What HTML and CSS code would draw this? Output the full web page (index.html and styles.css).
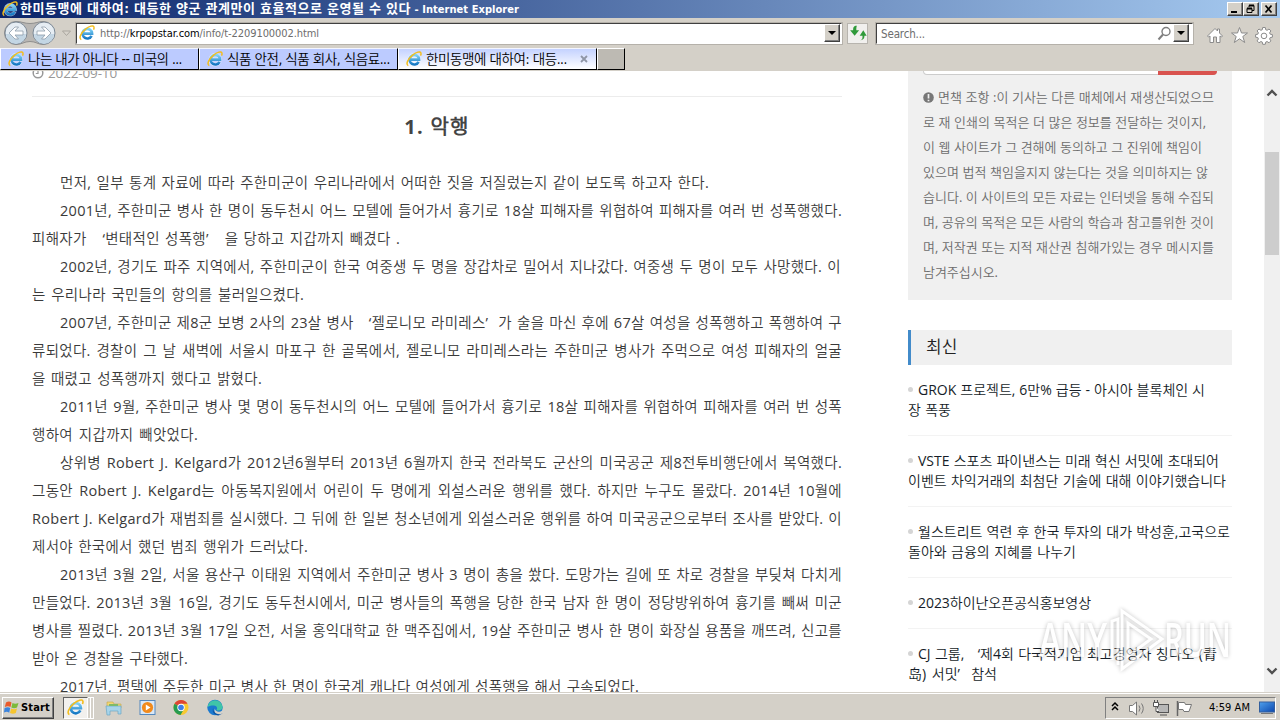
FILE: index.html
```html
<!DOCTYPE html>
<html lang="ko">

<head>
    <meta charset="UTF-8">
    <meta name="viewport" content="width=device-width, initial-scale=1.0">
    <title>한미동맹에 대하여</title>
    <link rel="stylesheet" href="styles.css">
</head>

<body>
    <svg width="0" height="0" class="defs">
        <defs>
            <linearGradient id="ieBlue" x1="0" y1="0" x2="0" y2="1">
                <stop offset="0" stop-color="#7fd3f7" />
                <stop offset="1" stop-color="#1779c4" />
            </linearGradient>
            <linearGradient id="screen" x1="0" y1="0" x2="1" y2="1">
                <stop offset="0" stop-color="#4fa0ec" />
                <stop offset="1" stop-color="#0b47ae" />
            </linearGradient>
            <symbol id="ie" viewBox="0 0 16 16">
                <path d="M12.8 10.6A4.9 4.9 0 1 1 13.2 8.4H4" fill="none" stroke="#fff" stroke-opacity=".6" stroke-width="3.6" />
                <path d="M12.6 10.8A4.8 4.8 0 1 1 13.1 8.6H4.4" fill="none" stroke="url(#ieBlue)" stroke-width="2.6" />
                <path d="M2.3 14.6C-.6 13.4 2 7.800 6.300 4.300 10 1.200 14.500-.3 15 2.200c.2.8-.1 1.700-.5 2.500" fill="none" stroke="#f3bd1d" stroke-width="1.500" />
            </symbol>
        </defs>
    </svg>

    <div id="titlebar">
        <svg class="ie16"><use href="#ie" /></svg>
        <span class="title"><span data-w="391" data-fit="letter">한미동맹에 대하여: 대등한 양군 관계만이 효율적으로 운영될 수 있다</span><span data-w="108" data-fit="letter"> - Internet Explorer</span></span>
        <div class="buttons">
            <i class="raised"><svg width="14" height="12"><path d="M3 9h6" stroke="#000" stroke-width="2" /></svg></i>
            <i class="raised"><svg width="14" height="12"><path d="M5 4V2.500h5v5H8M3 5.500h5v4H3z" fill="none" stroke="#000" /><path d="M5 2.500h5M3 5.500h5" stroke="#000" stroke-width="2" /></svg></i>
            <i class="raised last"><svg width="14" height="12"><path d="M3.500 2.500l6 7M9.500 2.500l-6 7" stroke="#000" stroke-width="1.700" /></svg></i>
        </div>
    </div>

    <div id="navbar">
        <svg class="backforward" width="72" height="26" viewBox="0 0 72 26">
            <path d="M15 1.500c6 0 8 2 14 2s8-2 13-2a11 11 0 0 1 0 23c-5 0-7-3-13-3s-8 3-14 3a11.500 11.500 0 0 1 0-23z" fill="#b9b7b4" stroke="#8e8e8e" />
            <circle cx="15" cy="13" r="11" fill="#e6edf3" stroke="#7c8996" />
            <circle cx="43" cy="13" r="11" fill="#e6edf3" stroke="#7c8996" />
            <path d="M5 14a10 10 0 0 0 20 0zM33 14a10 10 0 0 0 20 0z" fill="#c3d6e4" />
            <path d="M22 11h-8l3.500-4h-3.500l-6 6 6 6H17.500l-3.500-4h8zM36 11h8l-3.500-4h3.500l6 6-6 6h-3.500l3.500-4h-8z" fill="#fff" stroke="#8d9caa" stroke-width=".8" />
            <path d="M61.500 11h8l-4 4.500z" fill="#d8d4cc" stroke="#aaa69f" />
        </svg>
        <div class="field address">
            <svg class="ie16"><use href="#ie" /></svg>
            <span class="url" data-w="219" data-fit="letter">http://<b>krpopstar.com</b>/info/t-2209100002.html</span>
            <i class="raised drop"></i>
        </div>
        <div class="refresh">
            <svg width="18" height="18" viewBox="0 0 16 16"><path d="M7 1.500C4 1.500 3.700 3 3.700 5.500H1l4 5 4-5H6.500c0-2 0-2.500.5-4zM9 14.500c3 0 3-1.500 3-4H9.500l3.200-5 3 5h-2c0 2.500-1 4-4.700 4z" fill="#2f9a3a" /></svg>
        </div>
        <div class="field search">
            <span data-w="44" data-fit="letter">Search...</span>
            <svg width="15" height="15" viewBox="0 0 15 15"><circle cx="9" cy="5.500" r="4" fill="#fff" stroke="#7e7e7e" stroke-width="1.400" /><path d="M6 8.500L1.500 13.500" stroke="#7e7e7e" stroke-width="2" /></svg>
            <i class="raised drop"></i>
        </div>
        <svg class="tools" width="68" height="20" viewBox="0 0 68 20" fill="#fff" stroke="#8b8b8b">
            <path d="M1.500 11L9 3.500l2.500 2.500V4h2v4l3 3-1 1-1.500-1v6.500h-3.500V12H7.500v5.500H4V11l-1.500 1z" />
            <path d="M33.500 2.500l2 5.500h6l-4.700 3.500 1.900 6-5.200-3.700-5.200 3.700 1.900-6L25.500 8h6z" />
            <path d="M56.700 2.500h2.600l.4 2.200 1.400.6 1.900-1.300 1.900 1.900-1.300 1.900.6 1.400 2.200.4v2.600l-2.200.4-.6 1.400 1.300 1.900-1.900 1.900-1.900-1.300-1.400.6-.4 2.200h-2.600l-.4-2.200-1.400-.6-1.900 1.300-1.900-1.900 1.300-1.900-.6-1.400-2.200-.4V9.600l2.200-.4.6-1.400-1.300-1.900L53 4l1.900 1.300 1.400-.6z" />
            <circle cx="58" cy="10.900" r="2.800" />
        </svg>
    </div>

    <div id="tabs">
        <div class="tab"><svg class="ie16"><use href="#ie" /></svg><span data-w="154" data-fit="letter">나는 내가 아니다 -- 미국의 ...</span></div>
        <div class="tab"><svg class="ie16"><use href="#ie" /></svg><span data-w="163" data-fit="letter">식품 안전, 식품 회사, 식음료...</span></div>
        <div class="tab active"><svg class="ie16"><use href="#ie" /></svg><span data-w="141" data-fit="letter">한미동맹에 대하여: 대등...</span>
            <svg class="x" width="8" height="8"><path d="M1 1l6 6M7 1l-6 6" stroke="#8f96a6" stroke-width="1.800" /></svg>
        </div>
        <div class="newtab"></div>
    </div>

    <div id="view">
        <div id="article">
            <div class="date">
                <svg width="12" height="12" viewBox="0 0 12 12"><circle cx="6" cy="6" r="4.800" fill="none" stroke="#999" stroke-width="1.500" /><path d="M6 3v3.500H3.800" fill="none" stroke="#999" stroke-width="1.200" /></svg>
                <span data-w="72" data-fit="letter">2022-09-10</span>
            </div>
            <h2><span data-w="67" data-fit="letter">1. 악행</span></h2>
            <p class="in"><span data-w="649">먼저, 일부 통계 자료에 따라 주한미군이 우리나라에서 어떠한 짓을 저질렀는지 같이 보도록 하고자 한다.</span></p>
            <p class="in"><span data-w="782">2001년, 주한미군 병사 한 명이 동두천시 어느 모텔에 들어가서 흉기로 18살 피해자를 위협하여 피해자를 여러 번 성폭행했다.</span></p>
            <p><span data-w="368">피해자가 &nbsp;&nbsp;‘변태적인 성폭행’ &nbsp;&nbsp;을 당하고 지갑까지 빼겼다 .</span></p>
            <p class="in"><span data-w="781">2002년, 경기도 파주 지역에서, 주한미군이 한국 여중생 두 명을 장갑차로 밀어서 지나갔다. 여중생 두 명이 모두 사망했다. 이</span></p>
            <p><span data-w="272">는 우리나라 국민들의 항의를 불러일으켰다.</span></p>
            <p class="in"><span data-w="782">2007년, 주한미군 제8군 보병 2사의 23살 병사 &nbsp;&nbsp;‘젤로니모 라미레스’ &nbsp;가 술을 마신 후에 67살 여성을 성폭행하고 폭행하여 구</span></p>
            <p><span data-w="810">류되었다. 경찰이 그 날 새벽에 서울시 마포구 한 골목에서, 젤로니모 라미레스라는 주한미군 병사가 주먹으로 여성 피해자의 얼굴</span></p>
            <p><span data-w="230">을 때렸고 성폭행까지 했다고 밝혔다.</span></p>
            <p class="in"><span data-w="782">2011년 9월, 주한미군 병사 몇 명이 동두천시의 어느 모텔에 들어가서 흉기로 18살 피해자를 위협하여 피해자를 여러 번 성폭</span></p>
            <p><span data-w="166">행하여 지갑까지 빼앗었다.</span></p>
            <p class="in"><span data-w="782">상위병 Robert J. Kelgard가 2012년6월부터 2013년 6월까지 한국 전라북도 군산의 미국공군 제8전투비행단에서 복역했다.</span></p>
            <p><span data-w="810">그동안 Robert J. Kelgard는 아동복지원에서 어린이 두 명에게 외설스러운 행위를 했다. 하지만 누구도 몰랐다. 2014년 10월에</span></p>
            <p><span data-w="810">Robert J. Kelgard가 재범죄를 실시했다. 그 뒤에 한 일본 청소년에게 외설스러운 행위를 하여 미국공군으로부터 조사를 받았다. 이</span></p>
            <p><span data-w="276">제서야 한국에서 했던 범죄 행위가 드러났다.</span></p>
            <p class="in"><span data-w="782">2013년 3월 2일, 서울 용산구 이태원 지역에서 주한미군 병사 3 명이 총을 쐈다. 도망가는 길에 또 차로 경찰을 부딪쳐 다치게</span></p>
            <p><span data-w="810">만들었다. 2013년 3월 16일, 경기도 동두천시에서, 미군 병사들의 폭행을 당한 한국 남자 한 명이 정당방위하여 흉기를 빼써 미군</span></p>
            <p><span data-w="810">병사를 찔렸다. 2013년 3월 17일 오전, 서울 홍익대학교 한 맥주집에서, 19살 주한미군 병사 한 명이 화장실 용품을 깨뜨려, 신고를</span></p>
            <p><span data-w="156">받아 온 경찰을 구타했다.</span></p>
            <p class="in"><span data-w="579">2017년, 평택에 주둔한 미군 병사 한 명이 한국계 캐나다 여성에게 성폭행을 해서 구속되었다.</span></p>
        </div>

        <div id="sidebar">
            <div class="notice">
                <div class="searchbox"><i></i></div>
                <p><svg width="11" height="11" viewBox="0 0 11 11"><circle cx="5.500" cy="5.500" r="5.300" fill="#777" /><path d="M5.500 2v4.500M5.500 7.700v1.500" stroke="#efefef" stroke-width="1.700" /></svg><span data-w="276">면책 조항 :이 기사는 다른 매체에서 재생산되었으므</span></p>
                <p><span data-w="283">로 재 인쇄의 목적은 더 많은 정보를 전달하는 것이지,</span></p>
                <p><span data-w="279">이 웹 사이트가 그 견해에 동의하고 그 진위에 책임이</span></p>
                <p><span data-w="285">있으며 법적 책임을지지 않는다는 것을 의미하지는 않</span></p>
                <p><span data-w="291">습니다. 이 사이트의 모든 자료는 인터넷을 통해 수집되</span></p>
                <p><span data-w="291">며, 공유의 목적은 모든 사람의 학습과 참고를위한 것이</span></p>
                <p><span data-w="291">며, 저작권 또는 지적 재산권 침해가있는 경우 메시지를</span></p>
                <p><span data-w="75" data-fit="letter">남겨주십시오.</span></p>
            </div>
            <h3>최신</h3>
            <ul>
                <li><span data-w="287">GROK 프로젝트, 6만% 급등 - 아시아 블록체인 시</span><br><span data-w="43">장 폭풍</span></li>
                <li><span data-w="301">VSTE 스포츠 파이낸스는 미래 혁신 서밋에 초대되어</span><br><span data-w="318">이벤트 차익거래의 최첨단 기술에 대해 이야기했습니다</span></li>
                <li><span data-w="312">월스트리트 역련 후 한국 투자의 대가 박성훈,고국으로</span><br><span data-w="168">돌아와 금융의 지혜를 나누기</span></li>
                <li><span data-w="173" data-fit="letter">2023하이난오픈공식홍보영상</span></li>
                <li><span data-w="299">CJ 그룹, &nbsp;&nbsp;‘제4회 다국적기업 최고경영자 칭다오 (青</span><br><span data-w="89">岛) 서밋’ &nbsp;참석</span></li>
            </ul>
        </div>

        <div id="scrollbar">
            <svg width="12" height="8"><path d="M1.500 6.500L6 2l4.500 4.500" fill="none" stroke="#505050" stroke-width="2.400" /></svg>
            <div class="thumb"></div>
            <svg width="12" height="8"><path d="M1.500 1.500L6 6l4.500-4.500" fill="none" stroke="#505050" stroke-width="2.400" /></svg>
        </div>
    </div>

    <div id="taskbar">
        <div class="start raised">
            <svg width="15" height="15" viewBox="0 0 15 15">
                <path d="M2 2.500Q5 .500 7.500 2.500L6.500 7Q4 5.300.8 7z" fill="#ea5b2b" />
                <path d="M8.500 3Q11 4.500 14.500 3L13 7.500Q10 9 7.300 7.500z" fill="#7cba3b" />
                <path d="M.6 8Q4 6.500 6.200 8L5.200 12.700Q3 11 0 12.500z" fill="#3b84dd" />
                <path d="M7.200 8.500Q10 10 13 8.500L11.800 13Q9 14.500 6 13z" fill="#f6c52e" />
            </svg>
            <b data-w="29" data-fit="letter">Start</b>
        </div>
        <div class="running"><svg width="17" height="17"><use href="#ie" /></svg></div>
        <i class="stack"></i><i class="stack"></i>
        <svg class="quick" width="120" height="18" viewBox="0 0 120 18">
            <path d="M2 3h6l1 2h7v4H2z" fill="#f1d673" stroke="#c5a446" stroke-width=".6" />
            <path d="M1 7h15v8h-3v-3H5v4H2z" fill="#a7d4ea" stroke="#6aa6c4" stroke-width=".7" />
            <path d="M4 5h9v2H4z" fill="#7dba6c" />
            <rect x="35" y="1.500" width="15" height="14" fill="#d9e8f7" stroke="#5488bd" />
            <circle cx="42.500" cy="8.500" r="5.600" fill="#f18a1c" />
            <path d="M40.800 5.500v6l4.700-3z" fill="#fff" />
            <circle cx="76" cy="8.500" r="7.500" fill="#f8c931" />
            <path d="M76 8.500L69.500 4.700A7.500 7.500 0 0 1 82.500 4.700H76z" fill="#dd4436" />
            <path d="M69.500 4.700A7.500 7.500 0 0 0 75.500 16l3.500-6-3-1.500z" fill="#279b50" />
            <circle cx="76" cy="8.500" r="3.700" fill="#fff" />
            <circle cx="76" cy="8.500" r="2.800" fill="#3e7ee8" />
            <circle cx="110" cy="8.500" r="7.700" fill="#1b79cf" />
            <path d="M102.400 8A7.700 7.700 0 0 1 117.700 8c0 3-3 4-6.500 3.200 2-2 .5-4.500-2.200-4.700-3-.2-5 .500-6.600 1.500z" fill="#40c4a8" />
            <path d="M108.500 8.500c-1.500 4 3 6 7.500 4.500l1.500 1.500-4 2c-5-.5-7-4-5-8z" fill="#0d57a6" />
            <path d="M110 9.500c-.5 3 4 4 7 2.500l2 2-3 1c-4 1-8-1.500-6-5.500z" fill="#d6d2ca" />
        </svg>
        <div class="tray">
            <svg width="87" height="20" viewBox="0 0 87 20">
                <path d="M6 8l3-3 3 3M6 12l3-3 3 3" fill="none" stroke="#000" stroke-width="1.500" />
                <path d="M23.500 7.500h3L30.500 4v13l-4-3.500h-3z" fill="#fff" stroke="#777" />
                <path d="M33 7.500q2 3 0 6M35.500 5.500q3.500 5 0 10" fill="none" stroke="#777" />
                <rect x="51.500" y="6.500" width="11" height="8" fill="#b7b7b7" stroke="#555" />
                <path d="M54 17h7" stroke="#555" />
                <path d="M47.500 4.500h5v4h-5zM50 8v5.500h3M48.500 2v2M51.500 2v2" fill="#fff" stroke="#555" />
                <path d="M71.500 3v15" stroke="#666" stroke-width="1.500" />
                <path d="M72.500 4.500h6l1 2h6l-2.500 7h-5l-1-2h-4.500z" fill="#fff" stroke="#777" />
            </svg>
            <span data-w="41" data-fit="letter">4:59 AM</span>
            <svg class="desk" width="16" height="14"><rect x=".5" y="1" width="15" height="10" fill="url(#screen)" stroke="#335f9e" /><path d="M2 12.500h12" stroke="#777" /></svg>
        </div>
    </div>

    <svg id="watermark" width="200" height="70" viewBox="0 0 200 70">
        <g fill="#fff" font-family="Open Sans, sans-serif" font-size="47" font-weight="600">
            <text x="3" y="51" textLength="68" lengthAdjust="spacingAndGlyphs">ANY</text>
            <text x="128" y="51" textLength="67" lengthAdjust="spacingAndGlyphs">RUN</text>
        </g>
        <path d="M76 54V15l6-2v46M86 5l40 28-40 30zM92 17v33l23-17z" fill="none" stroke="#fff" stroke-width="3" />
    </svg>

    <script>
        // data-w: 한 줄의 폭(px). 남는 폭을 글자 또는 단어 사이에 나눈다.
        document.querySelectorAll('[data-w]').forEach((el) => {
            const text = el.textContent;
            const letter = el.dataset.fit === 'letter';
            const count = letter ? text.length : text.split(/[ \u00a0]/).length - 1;
            const rest = Number(el.dataset.w) - el.getBoundingClientRect().width;
            if (letter) {
                el.style.letterSpacing = rest / count + 'px';
            } else {
                el.style.wordSpacing = rest / count + 'px';
            }
        });
    </script>
</body>

</html>
```
FILE: styles.css
```css
* {
    box-sizing: border-box;
}

body {
    margin: 0;
    width: 1280px;
    height: 720px;
    overflow: hidden;
    background-color: #d4d0c8;
    font-family: "Open Sans", "Noto Sans CJK KR DemiLight", "Noto Sans CJK KR Light", "Noto Sans CJK KR", sans-serif;
    white-space: nowrap;
}

h2, h3, p, ul {
    margin: 0;
    padding: 0;
}

svg {
    display: block;
    flex: none;
}

.defs {
    position: absolute;
}

.ie16 {
    width: 16px;
    height: 16px;
}

.raised {
    background-color: #d4d0c8;
    border: 1px solid;
    border-color: #fff #404040 #404040 #fff;
    box-shadow: inset -1px -1px 0 #808080;
}

/* 제목 표시줄 */
#titlebar {
    display: flex;
    align-items: center;
    height: 18px;
    padding: 0 3px 0 2px;
    background: linear-gradient(to right, #0a246a, #a6caf0);
    color: #fff;
    font: bold 12px/18px "DejaVu Sans Condensed", "Noto Sans CJK KR", sans-serif;
}

#titlebar .title {
    margin-left: 2px;
    white-space: pre;
}

#titlebar .title span:last-child {
    font-size: 11px;
}

#titlebar .title span:first-child {
    font-size: 13px;
}

#titlebar .buttons {
    display: flex;
    margin-left: auto;
}

#titlebar .raised {
    width: 16px;
    height: 14px;
}

#titlebar .last {
    margin-left: 2px;
}

/* 주소 표시줄 */
#navbar {
    display: flex;
    align-items: center;
    height: 30px;
    padding: 0 6px 0 1px;
    font: 12px/18px "DejaVu Sans Condensed", "Noto Sans CJK KR", sans-serif;
    color: #6d6d6d;
}

.backforward {
    margin-right: 3px;
}

.field {
    display: flex;
    align-items: center;
    height: 21px;
    border: 1px solid;
    border-color: #404040 #fff #fff #404040;
    box-shadow: 0 0 0 1px #b5b1aa;
    background-color: #fff;
}

.address {
    width: 766px;
    padding: 0 1px 0 2px;
}

.url {
    margin: 2px 0 0 5px;
    font-size: 11px;
}

.url b {
    font-weight: normal;
    color: #000;
}

.drop {
    display: flex;
    align-items: center;
    justify-content: center;
    width: 16px;
    height: 18px;
    margin-left: auto;
}

.drop::before {
    content: "";
    border: 4px solid transparent;
    border-top-color: #000;
    border-bottom: 0;
}

.refresh {
    display: flex;
    align-items: center;
    justify-content: center;
    width: 21px;
    height: 21px;
    margin: 0 8px 0 5px;
    border: 1px solid #b7b4ae;
    background-color: #f1f0ee;
}

.search {
    width: 317px;
    padding: 0 3px 0 4px;
}

.search span {
    margin-top: 2px;
    font-size: 11.5px;
}

.search svg {
    margin-left: auto;
}

.search .drop {
    margin-left: 1px;
}

.tools {
    margin: 3px 0 0 auto;
}

/* 탭 */
#tabs {
    display: flex;
    height: 22px;
    font: 13.5px/20px "DejaVu Sans Condensed", "Noto Sans CJK KR DemiLight", "Noto Sans CJK KR", sans-serif;
    color: #000;
}

.tab {
    display: flex;
    align-items: center;
    width: 199px;
    padding: 0 8px 0 7px;
    border: 1px solid;
    border-color: #f4f6ff #000 #000 #fff;
    background-color: #bccbff;
}

.tab span {
    margin-left: 4px;
}

.tab.active {
    background: linear-gradient(#c4d2ff, #fff);
}

.tab .x {
    margin-left: auto;
}

.newtab {
    width: 28px;
    border: 1px solid;
    border-color: #fff #000 #000 #fff;
    background-color: #bdbab3;
}

/* 본문 */
#view {
    display: flex;
    height: 622px;
    overflow: hidden;
    border-top: 1px solid #d4d0c8;
    background-color: #fff;
}

#article {
    width: 810px;
    margin: -11px 66px 0 32px;
    color: #3a3a3a;
    font-size: 14.5px;
    font-stretch: 93%;
    letter-spacing: 0.3px;
}

.date {
    display: flex;
    align-items: center;
    height: 37px;
    padding-bottom: 10px;
    border-bottom: 1px solid #ececec;
    color: #999;
    font-size: 13.5px;
}

.date span {
    margin-left: 4px;
}

#article h2 {
    margin: 16px 0 28px;
    text-align: center;
    font-size: 20px;
    font-weight: bold;
    line-height: 28px;
    color: #444;
}

#article p {
    height: 28px;
    line-height: 27px;
}

#article .in {
    padding-left: 28px;
}

#sidebar {
    width: 324px;
}

.notice {
    height: 229px;
    padding: 0 15px;
    background-color: #f0f0f0;
    color: #6c6c6c;
    font-size: 13px;
}

.searchbox {
    height: 4px;
    margin-bottom: 10px;
    border: 1px solid #ccc;
    border-top: 0;
    border-radius: 0 0 4px 4px;
    background-color: #fff;
}

.searchbox i {
    display: block;
    width: 59px;
    height: 4px;
    margin: 0 -1px 0 auto;
    border-bottom-right-radius: 4px;
    background-color: #d9534f;
}

.notice p {
    display: flex;
    align-items: center;
    height: 25px;
    line-height: 25px;
}

.notice p svg {
    margin-right: 4px;
}

#sidebar h3 {
    height: 35px;
    margin-top: 30px;
    padding-left: 15px;
    border-left: 3px solid #428bca;
    background-color: #f0f0f0;
    color: #222;
    font-size: 17px;
    font-weight: normal;
    line-height: 33px;
}

#sidebar ul {
    list-style: none;
    color: #161d28;
    font-size: 14px;
    font-stretch: 93%;
}

#sidebar li {
    padding: 15px 0;
    border-bottom: 1px solid #f3f3f3;
    line-height: 20px;
}

#sidebar li::before {
    content: "";
    display: inline-block;
    width: 5px;
    height: 5px;
    margin-right: 5px;
    border-radius: 50%;
    background-color: #d5d5d5;
    vertical-align: 3px;
}

#scrollbar {
    display: flex;
    flex-direction: column;
    align-items: center;
    width: 16px;
    margin-left: auto;
    padding: 18px 0 17px;
    background-color: #f0f0f0;
}

#scrollbar .thumb {
    width: 14px;
    height: 103px;
    margin: 55px 0 auto;
    background-color: #cdcdcd;
}

/* 작업 표시줄 */
#taskbar {
    display: flex;
    align-items: center;
    height: 28px;
    padding: 2px 4px 0 2px;
    border-top: 1px solid #d4d0c8;
    box-shadow: inset 0 1px 0 #fff;
    font: 12px/20px "DejaVu Sans Condensed", sans-serif;
    color: #000;
}

.start {
    display: flex;
    align-items: center;
    width: 52px;
    height: 22px;
    padding-left: 1px;
    font-size: 11px;
}

.start b {
    margin-left: 2px;
}

.running {
    display: flex;
    align-items: center;
    width: 25px;
    height: 22px;
    margin-left: 9px;
    padding-left: 3px;
    border: 1px solid;
    border-color: #606060 #fff #fff #606060;
    background-color: #f2f0ed;
}

.stack {
    width: 3px;
    height: 22px;
    border: solid #fff;
    border-width: 1px 1px 1px 0;
}

.quick {
    margin-left: 11px;
}

.tray {
    display: flex;
    align-items: center;
    width: 171px;
    height: 22px;
    margin-left: auto;
    border: 1px solid;
    border-color: #808080 #fff #fff #808080;
}

.tray span {
    margin-left: 16px;
    font-size: 11px;
}

.desk {
    margin-left: auto;
}

#watermark {
    position: absolute;
    left: 1036px;
    top: 606px;
    opacity: 0.6;
    filter: drop-shadow(0 0 2px rgba(0, 0, 0, 0.4));
}
```
